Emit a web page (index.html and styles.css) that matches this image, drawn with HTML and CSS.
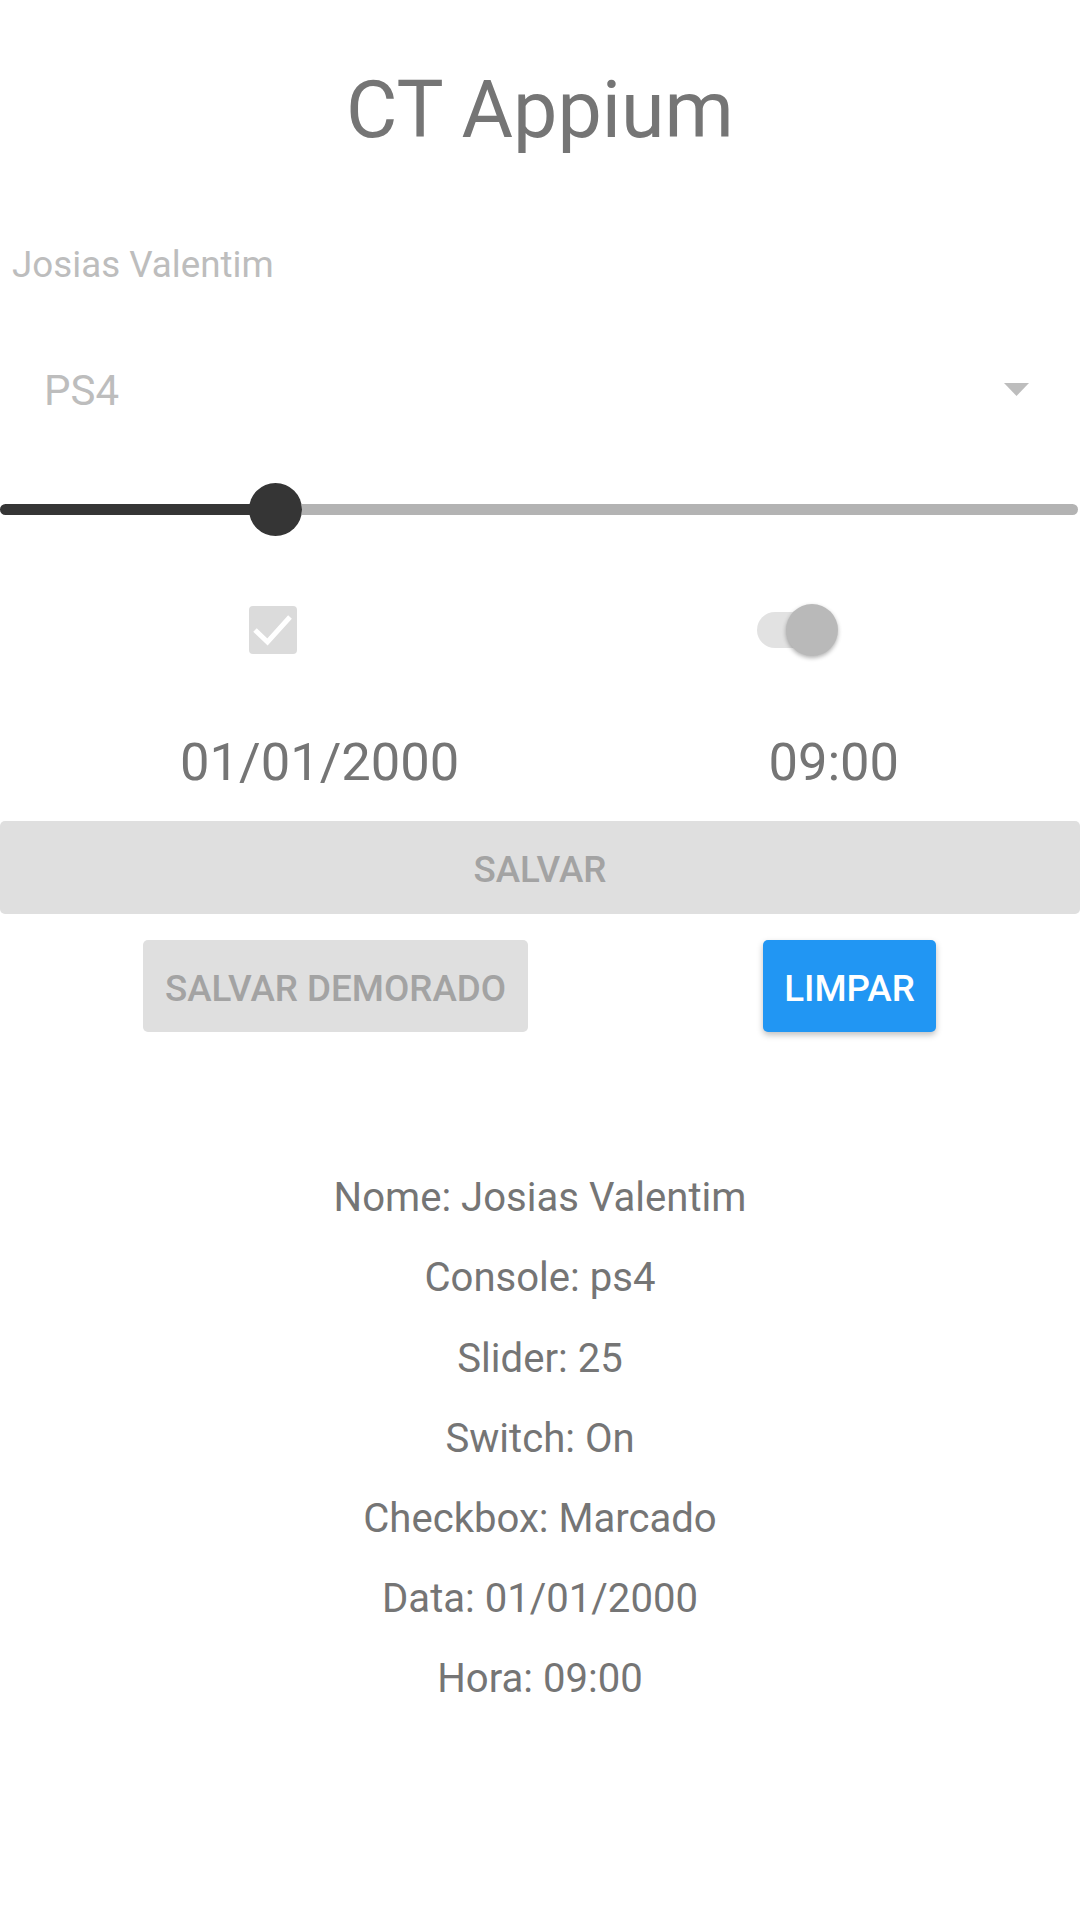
FILE: index.html
```html
<!DOCTYPE html>
<html lang="pt">
<head>
<meta charset="utf-8">
<title>CT Appium</title>
<link rel="stylesheet" href="styles.css">
</head>
<body>
<div class="screen">
  <h1 class="title">CT Appium</h1>
  <div class="field">Josias Valentim</div>
  <div class="select">
    <span class="select-value">PS4</span>
    <svg class="select-arrow" width="25" height="13" viewBox="0 0 25 13"><polygon points="0,0 25,0 12.5,13" fill="#bdbdbd"/></svg>
  </div>
  <div class="slider">
    <div class="track-on"></div>
    <div class="thumb"></div>
    <div class="track-off"></div>
  </div>
  <div class="toggles">
    <div class="checkbox">
      <svg width="48" height="48" viewBox="0 0 48 48"><polyline points="6,24 18.5,36 41,11" fill="none" stroke="#ffffff" stroke-width="5"/></svg>
    </div>
    <div class="switch">
      <div class="switch-track"></div>
      <div class="switch-thumb"></div>
    </div>
  </div>
  <div class="datetime">
    <span class="date">01/01/2000</span>
    <span class="time">09:00</span>
  </div>
  <div class="btn btn-full">SALVAR</div>
  <div class="btn-row">
    <div class="btn btn-delay">SALVAR DEMORADO</div>
    <div class="btn btn-primary">LIMPAR</div>
  </div>
  <div class="results">
    <div class="result">Nome: Josias Valentim</div>
    <div class="result">Console: ps4</div>
    <div class="result">Slider: 25</div>
    <div class="result">Switch: On</div>
    <div class="result">Checkbox: Marcado</div>
    <div class="result">Data: 01/01/2000</div>
    <div class="result">Hora: 09:00</div>
  </div>
</div>
</body>
</html>
```

FILE: styles.css
```css
html, body {
  margin: 0;
  padding: 0;
  background: #ffffff;
}

.screen {
  width: 1080px;
  height: 1920px;
  font-family: Roboto, "Noto Sans", sans-serif;
  color: #757575;
  overflow: hidden;
}

.title {
  margin: 64px 0 0 0;
  font-size: 79px;
  line-height: 93px;
  font-weight: 400;
  text-align: center;
  color: #757575;
}

.field {
  margin-top: 86px;
  padding-left: 12px;
  font-size: 36.75px;
  line-height: 44px;
  color: #bdbdbd;
}

.select {
  margin-top: 78.5px;
  height: 50px;
  padding: 0 51px 0 44px;
  display: flex;
  align-items: center;
  justify-content: space-between;
}

.select-value {
  font-size: 42px;
  line-height: 50px;
  color: #bdbdbd;
}

.select-arrow {
  display: block;
  margin-top: -3px;
}

.slider {
  margin-top: 67px;
  height: 53px;
  width: 1078px;
  display: flex;
  align-items: center;
}

.track-on {
  width: 250px;
  height: 11px;
  background: #353535;
  border-radius: 6px 0 0 6px;
}

.thumb {
  width: 53px;
  height: 53px;
  border-radius: 50%;
  background: #353535;
  margin-left: -1px;
}

.track-off {
  flex: 1;
  height: 11px;
  background: #b3b3b3;
  border-radius: 0 6px 6px 0;
}

.toggles {
  margin-top: 68.7px;
  height: 52px;
  display: flex;
  align-items: center;
  padding-left: 249px;
  gap: 460px;
}

.checkbox {
  width: 48px;
  height: 48px;
  border-radius: 4px;
  background: #dbdbdb;
}

.checkbox svg {
  display: block;
}

.switch {
  display: flex;
  align-items: center;
  height: 52px;
}

.switch-track {
  width: 75px;
  height: 36px;
  border-radius: 18px;
  background: #e2e2e2;
}

.switch-thumb {
  width: 52px;
  height: 52px;
  border-radius: 50%;
  background: #b9b9b9;
  margin-left: -46px;
  box-shadow: 0 2px 4px rgba(0, 0, 0, 0.3);
}

.datetime {
  margin-top: 74.5px;
  display: flex;
  padding-left: 180px;
  gap: 309px;
  font-size: 52.5px;
  line-height: 62px;
  color: #757575;
}

.btn {
  display: flex;
  align-items: center;
  justify-content: center;
  height: 93px;
  padding-top: 4px;
  border-radius: 5px;
  background: #dfdfdf;
  color: #a3a3a3;
  font-size: 36.75px;
  font-weight: 500;
  box-sizing: border-box;
}

.btn-full {
  margin-top: 28.5px;
  width: 1080px;
}

.btn-row {
  margin-top: 26px;
  display: flex;
  padding-left: 143px;
  gap: 235px;
}

.btn-delay {
  width: 385px;
  height: 92px;
}

.btn-primary {
  width: 173px;
  height: 92px;
  background: #2196f3;
  color: #ffffff;
  box-shadow: 0 3px 6px rgba(0, 0, 0, 0.25);
}

.results {
  margin-top: 126px;
  text-align: center;
}

.result {
  font-size: 40.1px;
  line-height: 80.2px;
  color: #757575;
}
```
